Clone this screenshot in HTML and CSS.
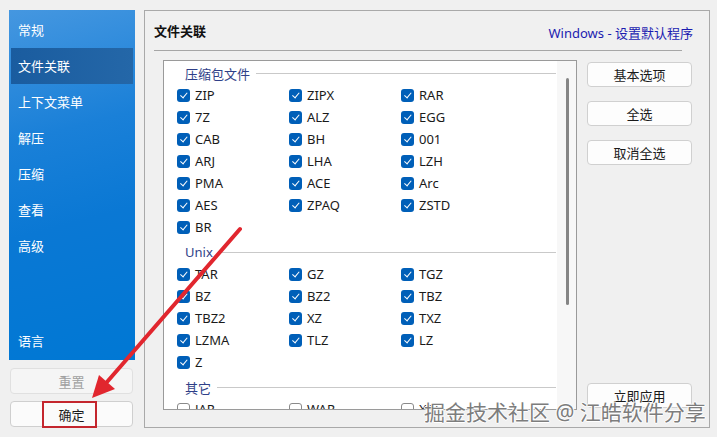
FILE: index.html
```html
<!DOCTYPE html>
<html lang="zh-CN">
<head>
    <meta charset="UTF-8">
    <title>设置 - 文件关联</title>
    <link rel="stylesheet" href="styles.css">
</head>
<body>
    <div class="window">
        <!-- left navigation -->
        <div class="side">
            <ul class="nav">
                <li>常规</li>
                <li class="active">文件关联</li>
                <li>上下文菜单</li>
                <li>解压</li>
                <li>压缩</li>
                <li>查看</li>
                <li>高级</li>
                <li class="last">语言</li>
            </ul>
            <button class="side-btn disabled">重置</button>
            <button class="side-btn">确定</button>
        </div>

        <!-- page -->
        <div class="main">
            <div class="head">
                <h2>文件关联</h2>
                <a class="link">Windows - 设置默认程序</a>
            </div>
            <div class="sep"></div>

            <div class="body">
                <div class="listbox">
                    <div class="list">
                        <div class="group">压缩包文件</div>
                        <div class="grid">
                            <label class="cb"><span class="box"></span>ZIP</label>
                            <label class="cb"><span class="box"></span>ZIPX</label>
                            <label class="cb"><span class="box"></span>RAR</label>
                            <label class="cb"><span class="box"></span>7Z</label>
                            <label class="cb"><span class="box"></span>ALZ</label>
                            <label class="cb"><span class="box"></span>EGG</label>
                            <label class="cb"><span class="box"></span>CAB</label>
                            <label class="cb"><span class="box"></span>BH</label>
                            <label class="cb"><span class="box"></span>001</label>
                            <label class="cb"><span class="box"></span>ARJ</label>
                            <label class="cb"><span class="box"></span>LHA</label>
                            <label class="cb"><span class="box"></span>LZH</label>
                            <label class="cb"><span class="box"></span>PMA</label>
                            <label class="cb"><span class="box"></span>ACE</label>
                            <label class="cb"><span class="box"></span>Arc</label>
                            <label class="cb"><span class="box"></span>AES</label>
                            <label class="cb"><span class="box"></span>ZPAQ</label>
                            <label class="cb"><span class="box"></span>ZSTD</label>
                            <label class="cb"><span class="box"></span>BR</label>
                        </div>

                        <div class="group">Unix</div>
                        <div class="grid">
                            <label class="cb"><span class="box"></span>TAR</label>
                            <label class="cb"><span class="box"></span>GZ</label>
                            <label class="cb"><span class="box"></span>TGZ</label>
                            <label class="cb"><span class="box"></span>BZ</label>
                            <label class="cb"><span class="box"></span>BZ2</label>
                            <label class="cb"><span class="box"></span>TBZ</label>
                            <label class="cb"><span class="box"></span>TBZ2</label>
                            <label class="cb"><span class="box"></span>XZ</label>
                            <label class="cb"><span class="box"></span>TXZ</label>
                            <label class="cb"><span class="box"></span>LZMA</label>
                            <label class="cb"><span class="box"></span>TLZ</label>
                            <label class="cb"><span class="box"></span>LZ</label>
                            <label class="cb"><span class="box"></span>Z</label>
                        </div>

                        <div class="group">其它</div>
                        <div class="grid">
                            <label class="cb"><span class="box off"></span>JAR</label>
                            <label class="cb"><span class="box off"></span>WAR</label>
                            <label class="cb"><span class="box off"></span>XPI</label>
                        </div>
                    </div>
                    <div class="track"><div class="thumb"></div></div>
                </div>

                <div class="actions">
                    <button class="btn">基本选项</button>
                    <button class="btn">全选</button>
                    <button class="btn">取消全选</button>
                    <button class="btn apply">立即应用</button>
                </div>
            </div>
        </div>
    </div>

    <!-- annotation on top of the screenshot -->
    <div class="mark"></div>
    <svg class="arrow" width="717" height="437" viewBox="0 0 717 437">
        <line x1="240" y1="229" x2="107" y2="382" stroke="#e1262e" stroke-width="4" stroke-linecap="round"/>
        <polygon points="92,398 99,375 115,389" fill="#e1262e"/>
    </svg>
    <div class="watermark">掘金技术社区 @ 江皓软件分享</div>
</body>
</html>
```

FILE: styles.css
```css
body{
    margin: 0;
    width: 717px;
    height: 437px;
    overflow: hidden;
    position: relative;
    background-color: #f0f0f0;
    font-family: "Noto Sans", "Noto Sans CJK SC", sans-serif;
    font-size: 13px;
    color: #1a1a1a;
}
.window{
    display: flex;
    padding: 10px 0 0 9px;
    gap: 9px;
}

/* sidebar */
.side{
    width: 126px;
    display: flex;
    flex-direction: column;
}
.nav{
    list-style: none;
    margin: 0;
    padding: 2px 2px 1px 2px;
    height: 347px;
    display: flex;
    flex-direction: column;
    background: linear-gradient(165deg, #4597e0 0%, #1a80d8 35%, #0a78d4 60%, #0078d4 100%);
}
.nav li{
    height: 36px;
    line-height: 36px;
    padding-left: 7px;
    color: #fff;
}
.nav li.active{
    background: linear-gradient(90deg, #1a5c9f, #2467a8);
}
.nav li.last{
    margin-top: auto;
}
.side-btn{
    margin: 8px 2px 0 1px;
    height: 26px;
    border: 1px solid #d6d6d6;
    border-radius: 4px;
    background-color: #fbfbfb;
    font-family: inherit;
    font-size: 13px;
    color: #1a1a1a;
    padding: 0;
}
.side-btn + .side-btn{
    margin-top: 7px;
    border-color: #cfcfcf;
}
.side-btn.disabled{
    background-color: #f5f5f5;
    border-color: #e0e0e0;
    color: #a0a0a0;
}

/* main page */
.main{
    width: 564px;
    height: 416px;
    border: 1px solid #a9a9a9;
    padding: 0;
}
.head{
    display: flex;
    justify-content: space-between;
    align-items: center;
    padding: 0 16px 0 9px;
    height: 39px;
}
.head h2{
    margin: 0;
    font-size: 13px;
    line-height: 18px;
    font-weight: bold;
    color: #111;
}
.link{
    color: #1c1cb0;
    line-height: 18px;
    padding-top: 4px;
}
.sep{
    margin: 0 27px 0 9px;
    height: 1px;
    background-color: #a6a6a6;
}
.body{
    display: flex;
    margin: 9px 0 0 18px;
}

/* list box */
.listbox{
    width: 412px;
    height: 348px;
    border: 1px solid #9a9a9a;
    background-color: #fff;
    display: flex;
    overflow: hidden;
}
.list{
    flex: 1;
    padding: 1px 1px 0 13px;
}
.group{
    display: flex;
    align-items: center;
    height: 22px;
    margin-top: 3px;
    padding-left: 8px;
    color: #2f3f88;
}
.list .group:first-child{
    margin-top: 0;
}
.group::after{
    content: "";
    flex: 1;
    height: 1px;
    margin-left: 6px;
    background-color: #c9c9c9;
}
.grid{
    display: grid;
    grid-template-columns: 112px 112px 112px;
}
.cb{
    display: flex;
    align-items: center;
    height: 22px;
}
.box{
    width: 13px;
    height: 13px;
    border-radius: 3px;
    background-color: #005fb8;
    margin-right: 5px;
    position: relative;
    box-sizing: border-box;
}
.box::after{
    content: "";
    position: absolute;
    left: 4.5px;
    top: 2.5px;
    width: 3px;
    height: 5.5px;
    border: solid #fff;
    border-width: 0 1.2px 1.2px 0;
    transform: rotate(40deg);
}
.box.off{
    background-color: #fff;
    border: 1px solid #8a8a8a;
}
.box.off::after{
    display: none;
}
.track{
    width: 19px;
    background-color: #f7f7f7;
    padding-top: 17px;
}
.thumb{
    width: 3px;
    height: 227px;
    margin-left: 9px;
    border-radius: 2px;
    background-color: #858585;
}

/* buttons on the right */
.actions{
    width: 105px;
    margin-left: 10px;
    padding: 2px 0;
    display: flex;
    flex-direction: column;
    gap: 14px;
}
.btn{
    height: 25px;
    border: 1px solid #d0d0d0;
    border-radius: 4px;
    background-color: #fdfdfd;
    font-family: inherit;
    font-size: 13px;
    color: #1a1a1a;
    padding: 0;
}
.btn.apply{
    margin-top: auto;
}

/* overlays */
.mark{
    position: absolute;
    left: 42px;
    top: 401px;
    width: 51px;
    height: 23px;
    border: 2px solid #c4262e;
}
.arrow{
    position: absolute;
    left: 0;
    top: 0;
    pointer-events: none;
}
.watermark{
    position: absolute;
    left: 424px;
    top: 396px;
    font-size: 21px;
    color: #7d7d7d;
    white-space: nowrap;
    text-shadow: 1px 0 #fff, -1px 0 #fff, 0 1px #fff, 0 -1px #fff;
}
```
